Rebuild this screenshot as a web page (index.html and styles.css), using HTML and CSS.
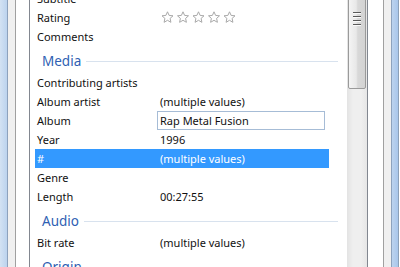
FILE: index.html
```html
<!DOCTYPE html>
<html>
<head>
<meta charset="utf-8">
<link rel="stylesheet" href="styles.css">
</head>
<body>
<div class="win">
  <div class="frame frame-l"></div>
  <div class="dlg dlg-l"></div>
  <div class="page page-l"></div>
  <div class="list">
    <div class="content">
      <div class="row"><span class="lbl">Subtitle</span><span class="val"></span></div>
      <div class="row"><span class="lbl">Rating</span><span class="val stars">
        <svg width="80" height="13" viewBox="0 0 80 13">
          <g fill="#fff" stroke="#a9a9a9" stroke-width="1" stroke-linejoin="round">
            <path d="M6.5 0.8 L8.1 4.4 L12 4.8 L9.1 7.4 L9.9 11.3 L6.5 9.3 L3.1 11.3 L3.9 7.4 L1 4.8 L4.9 4.4 Z"/>
            <path transform="translate(15.5 0)" d="M6.5 0.8 L8.1 4.4 L12 4.8 L9.1 7.4 L9.9 11.3 L6.5 9.3 L3.1 11.3 L3.9 7.4 L1 4.8 L4.9 4.4 Z"/>
            <path transform="translate(31 0)" d="M6.5 0.8 L8.1 4.4 L12 4.8 L9.1 7.4 L9.9 11.3 L6.5 9.3 L3.1 11.3 L3.9 7.4 L1 4.8 L4.9 4.4 Z"/>
            <path transform="translate(46.5 0)" d="M6.5 0.8 L8.1 4.4 L12 4.8 L9.1 7.4 L9.9 11.3 L6.5 9.3 L3.1 11.3 L3.9 7.4 L1 4.8 L4.9 4.4 Z"/>
            <path transform="translate(62 0)" d="M6.5 0.8 L8.1 4.4 L12 4.8 L9.1 7.4 L9.9 11.3 L6.5 9.3 L3.1 11.3 L3.9 7.4 L1 4.8 L4.9 4.4 Z"/>
          </g>
        </svg></span></div>
      <div class="row"><span class="lbl">Comments</span><span class="val"></span></div>
      <div class="group"><span class="gname">Media</span><span class="gline"></span></div>
      <div class="row"><span class="lbl">Contributing artists</span><span class="val"></span></div>
      <div class="row"><span class="lbl">Album artist</span><span class="val">(multiple values)</span></div>
      <div class="row"><span class="lbl">Album</span><span class="val edit"><span class="box">Rap Metal Fusion</span></span></div>
      <div class="row"><span class="lbl">Year</span><span class="val">1996</span></div>
      <div class="row sel"><span class="lbl">#</span><span class="val">(multiple values)</span></div>
      <div class="row"><span class="lbl">Genre</span><span class="val"></span></div>
      <div class="row"><span class="lbl">Length</span><span class="val">00:27:55</span></div>
      <div class="group"><span class="gname">Audio</span><span class="gline"></span></div>
      <div class="row"><span class="lbl">Bit rate</span><span class="val">(multiple values)</span></div>
      <div class="group"><span class="gname">Origin</span><span class="gline"></span></div>
    </div>
    <div class="scroll">
      <div class="thumb"><div class="grip"><i></i><i></i><i></i><i></i></div></div>
    </div>
  </div>
  <div class="page page-r"></div>
  <div class="dlg dlg-r"></div>
  <div class="frame frame-r"></div>
</div>
</body>
</html>
```
FILE: styles.css
```css
html, body {
  margin: 0;
  padding: 0;
  width: 400px;
  height: 267px;
  overflow: hidden;
  background: #fff;
}
.win {
  display: flex;
  width: 400px;
  height: 267px;
  font-family: "Noto Sans", "Open Sans", sans-serif;
  font-size: 11px;
  color: #111;
}
.frame {
  width: 7px;
  background: linear-gradient(to right, #d3e2f3, #bcd3ee);
}
.frame-l { border-right: 1px solid #8da2bd; }
.frame-r {
  border-left: 1px solid #8da2bd;
  border-right: 1px solid #8ba0b8;
  width: 6px;
  background: linear-gradient(to right, #bcd3ee, #a9c6ea);
}
.dlg {
  background: #f0f0f0;
}
.dlg-l { width: 7px; border-right: 1px solid #a0a0a0; }
.dlg-r { width: 7px; border-left: 1px solid #a0a0a0; }
.page {
  background: #fff;
}
.page-l { width: 13px; }
.page-r { width: 15px; }
.list {
  display: flex;
  width: 337px;
  border-left: 1px solid #828790;
  border-right: 1px solid #828790;
  overflow: hidden;
}
.content {
  width: 317px;
  margin-top: -11px;
  display: flex;
  flex-direction: column;
}
.row {
  display: flex;
  align-items: center;
  height: 19px;
  margin-left: 5px;
  width: 294px;
  line-height: 19px;
  white-space: nowrap;
}
.lbl {
  width: 120px;
  padding-left: 2px;
}
.val {
  flex: 1;
  padding-left: 3px;
  display: flex;
  align-items: center;
}
.stars { padding-left: 4px; }
.stars svg { display: block; }
.edit { padding-left: 0; }
.box {
  box-sizing: border-box;
  width: 168px;
  height: 19px;
  line-height: 17px;
  border: 1px solid #a6bcd6;
  padding-left: 2px;
  background: #fff;
}
.sel {
  background: #3399ff;
  color: #fff;
}
.group {
  display: flex;
  align-items: center;
  height: 27px;
  box-sizing: border-box;
  padding-top: 6px;
  padding-bottom: 3px;
  margin-left: 12px;
  width: 296px;
}
.gname {
  font-size: 13.5px;
  line-height: 18px;
  color: #2f5fb3;
  padding-right: 5px;
}
.gline {
  flex: 1;
  height: 1px;
  background: #d8e2ee;
}
.scroll {
  width: 20px;
  background: linear-gradient(to right, #e3e3e3, #efefef 30%, #efefef 70%, #e6e6e6);
}
.thumb {
  box-sizing: border-box;
  margin-left: 1px;
  width: 18px;
  height: 92px;
  margin-top: -3px;
  border: 1px solid #9a9a9a;
  border-radius: 2px;
  background: linear-gradient(to right, #f4f4f4, #e8e8e8 45%, #d8d8d8 55%, #d3d3d3);
  display: flex;
  align-items: flex-start;
  justify-content: center;
  padding-top: 14px;
}
.grip {
  display: flex;
  flex-direction: column;
  gap: 2px;
  width: 8px;
}
.grip i {
  display: block;
  height: 1px;
  background: #5a5a5a;
  border-bottom: 1px solid #fbfbfb;
}
```
